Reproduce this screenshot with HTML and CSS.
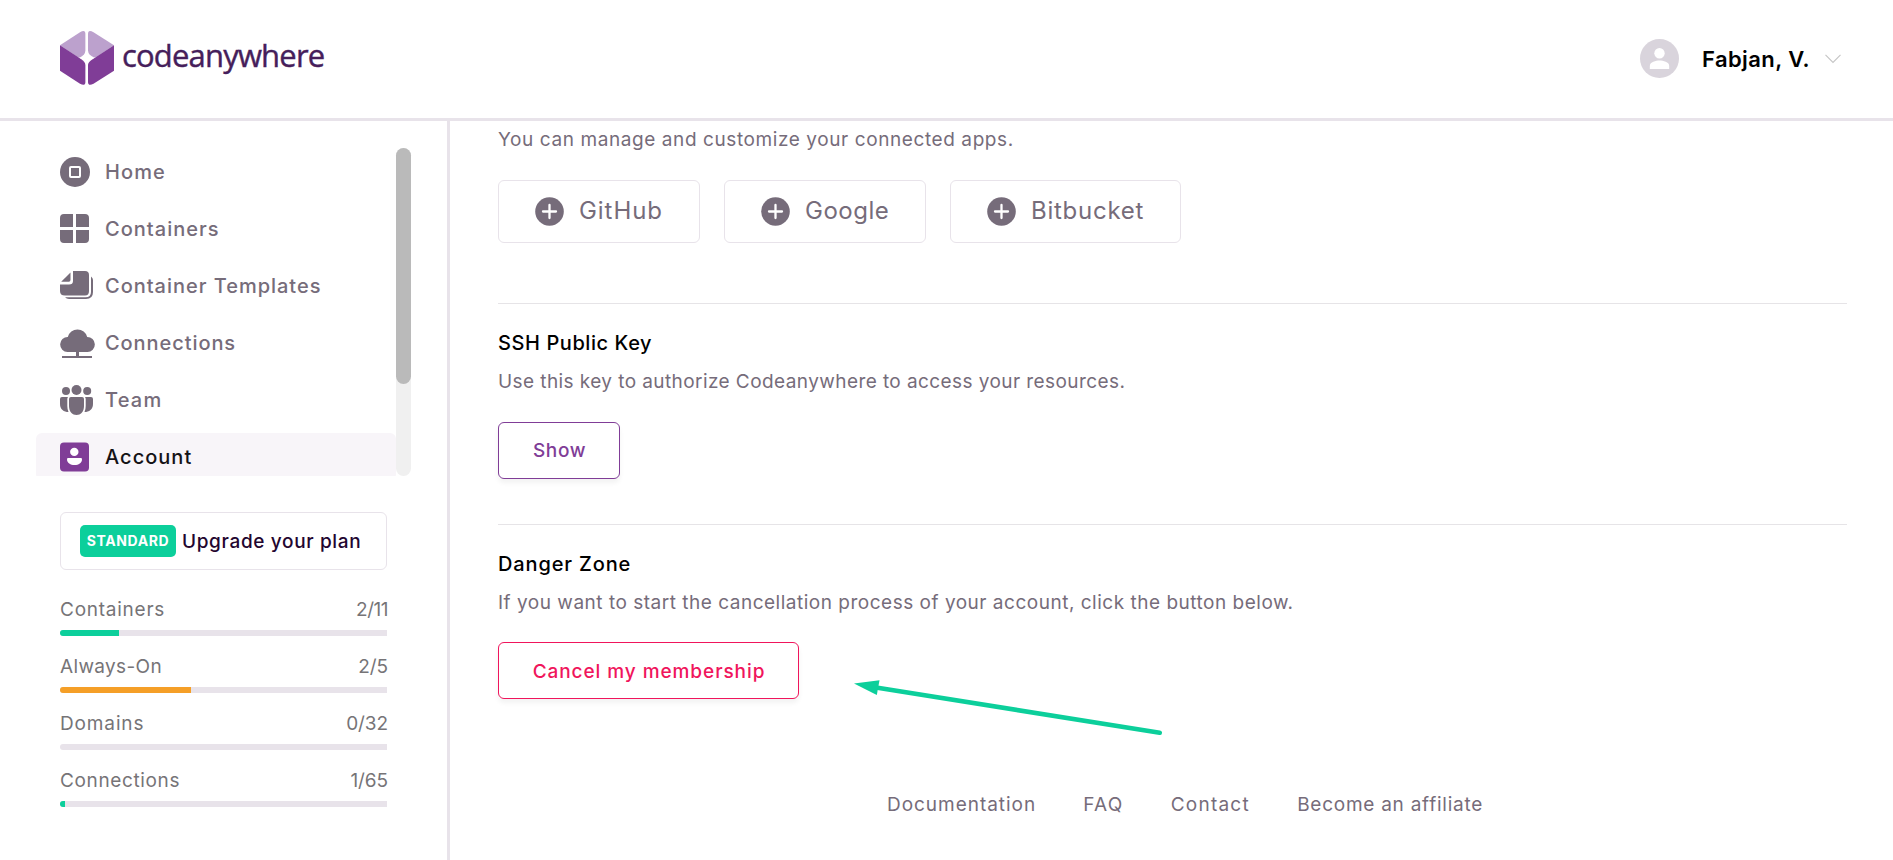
FILE: index.html
```html
<!DOCTYPE html>
<html lang="en">
<head>
<meta charset="utf-8">
<title>Codeanywhere</title>
<link rel="stylesheet" href="styles.css">
</head>
<body>
<header class="header">
  <div class="logo">
    <svg width="54" height="54" viewBox="0 0 54 54">
      <path fill="#bca1cd" d="M0 14.3 20 1.3Q25.4-1.8 25.4 3V19.5Q25.2 23.8 20 26.6L17 25.8Z"/>
      <path fill="#bca1cd" d="M54 14.3 33.5 1.3Q28 -1.8 28 3V19.5Q28.2 23.8 34 26.6L37 25.8Z"/>
      <path fill="#803d97" d="M0 14.3 21 28Q25.4 31 25.4 34V51Q25.4 55.5 20 52.8L0 39.7Z"/>
      <path fill="#803d97" d="M54 14.3 33 28Q28 31 28 34V51Q28 55.5 33.5 52.8L54 39.7Z"/>
      <path fill="#fff" d="M26.700 20Q27.500 25.500 34 27Q27.500 28.500 26.700 34Q26 28.500 19.500 27Q26 25.500 26.700 20Z"/>
    </svg>
    <span class="logo-text">codeanywhere</span>
  </div>
  <div class="user">
    <svg width="39" height="39" viewBox="0 0 39 39"><circle cx="19.5" cy="19.5" r="19.5" fill="#d9d4dc"/><circle cx="19.5" cy="14.2" r="5.2" fill="#fff"/><path fill="#fff" d="M9.8 30V27C9.8 23 16 21.6 19.5 21.6S29.2 23 29.2 27V30Z"/></svg>
    <span class="user-name">Fabjan, V.</span>
    <svg class="chevron" width="16" height="10" viewBox="0 0 16 10"><path d="M.5.8 8 8.4 15.5.8" fill="none" stroke="#c5c5c5" stroke-width="1.1"/></svg>
  </div>
</header>
<div class="layout">
  <aside class="sidebar">
    <div class="nav-wrap">
      <nav class="nav">
        <a class="nav-item"><svg class="icon" viewBox="0 0 36 30"><circle cx="15" cy="15" r="15"/><rect x="10" y="10" width="10" height="10" rx="1" fill="none" stroke="#fff" stroke-width="2"/></svg><span class="t-home">Home</span></a>
        <a class="nav-item"><svg class="icon" viewBox="0 1 36 30"><path d="M4 1H13V14H0V5Q0 1 4 1ZM16 1H25Q29 1 29 5V14H16ZM0 17H13V30H4Q0 30 0 26ZM16 17H29V26Q29 30 25 30H16Z"/></svg><span class="t-containers">Containers</span></a>
        <a class="nav-item"><svg class="icon" viewBox="0 1 36 30"><path d="M13 1H25Q29 1 29 5V21Q29 25.500 25 25.500H5Q0 25.500 0 21V14.500H9Q13 14.500 13 11Z"/><path d="M10.500 2.500V10Q10.500 11.700 8.800 11.700H1.200Z"/><path d="M31 6.500Q33 8 33 10V22Q33 29 26 29H9Q6.500 29 5 27.300H25.500Q31 27.300 31 22Z"/></svg><span class="t-templates">Container Templates</span></a>
        <a class="nav-item"><svg class="icon" viewBox="0 0 36 30"><path d="M7.500 24A7.500 7.500 0 0 1 7.800 9A10 10 0 0 1 27.200 9A7.500 7.500 0 0 1 27.500 24H19V28H32V30H2V28H16V24Z"/></svg><span class="t-connections">Connections</span></a>
        <a class="nav-item"><svg class="icon" viewBox="0 0 36 30"><circle cx="16.500" cy="5" r="5"/><circle cx="6" cy="6" r="4"/><circle cx="27.200" cy="6" r="4"/><path d="M9 14Q9 12 11 12H22Q24 12 24 14V21C24 27 20.500 30 16.500 30S9 27 9 21Z"/><path d="M2 12H8Q7.300 13 7.300 14V21Q7.300 24.500 8.500 27C4 27 0 24.500 0 19V14Q0 12 2 12ZM31 12H25Q25.700 13 25.700 14V21Q25.700 24.500 24.500 27C29 27 33 24.500 33 19V14Q33 12 31 12Z"/></svg><span class="t-team">Team</span></a>
        <a class="nav-item active"><svg class="icon" viewBox="0 .6 36 30"><rect y="1" width="29" height="29" rx="4" fill="#803d97"/><circle cx="14.300" cy="10.500" r="4.200" fill="#fff"/><path fill="#fff" d="M8 16.700H21Q22 16.700 22 18C22 21.500 18.500 23.500 14.500 23.500S7 21.500 7 18Q7 16.700 8 16.700Z"/></svg><span class="t-account">Account</span></a>
      </nav>
      <div class="scrollbar"><div class="thumb"></div></div>
    </div>
    <div class="plan"><span class="badge">STANDARD</span><span class="plan-text">Upgrade your plan</span></div>
    <div class="stats">
      <div class="stat"><div class="stat-row"><span class="s-containers">Containers</span><span class="s-v1">2/11</span></div><div class="bar"><div class="fill" style="width:18.1%"></div></div></div>
      <div class="stat"><div class="stat-row"><span class="s-always">Always-On</span><span>2/5</span></div><div class="bar"><div class="fill orange" style="width:40%"></div></div></div>
      <div class="stat"><div class="stat-row"><span class="s-domains">Domains</span><span>0/32</span></div><div class="bar"></div></div>
      <div class="stat"><div class="stat-row"><span class="s-connections">Connections</span><span>1/65</span></div><div class="bar"><div class="fill" style="width:1.54%"></div></div></div>
    </div>
  </aside>
  <main class="main">
    <p class="desc"><span class="d-apps">You can manage and customize your connected apps.</span></p>
    <div class="apps">
      <button class="app"><svg width="29" height="29" viewBox="0 0 29 29"><circle cx="14.500" cy="14.500" r="14.300" fill="#766c7a"/><path d="M14.500 8V21M8 14.500H21" stroke="#fff" stroke-width="2.300" stroke-linecap="round"/></svg><span class="a-github">GitHub</span></button>
      <button class="app"><svg width="29" height="29" viewBox="0 0 29 29"><circle cx="14.500" cy="14.500" r="14.300" fill="#766c7a"/><path d="M14.500 8V21M8 14.500H21" stroke="#fff" stroke-width="2.300" stroke-linecap="round"/></svg><span class="a-google">Google</span></button>
      <button class="app wide"><svg width="29" height="29" viewBox="0 0 29 29"><circle cx="14.500" cy="14.500" r="14.300" fill="#766c7a"/><path d="M14.500 8V21M8 14.500H21" stroke="#fff" stroke-width="2.300" stroke-linecap="round"/></svg><span class="a-bitbucket">Bitbucket</span></button>
    </div>
    <section class="section ssh">
      <h2 class="h-ssh">SSH Public Key</h2>
      <p class="desc"><span class="d-ssh">Use this key to authorize Codeanywhere to access your resources.</span></p>
      <button class="btn show">Show</button>
    </section>
    <section class="section danger">
      <h2 class="h-danger">Danger Zone</h2>
      <p class="desc"><span class="d-danger">If you want to start the cancellation process of your account, click the button below.</span></p>
      <button class="btn cancel">Cancel my membership</button>
      <svg class="arrow" width="312" height="60" viewBox="0 0 312 60"><path d="M22 7.500 305.700 52.800" stroke="#0ccf9b" stroke-width="4.600" stroke-linecap="round"/><path fill="#0ccf9b" d="M0 3.500 25.500.3 22.800 15Z"/></svg>
    </section>
    <footer class="footer"><a class="f-doc">Documentation</a><a class="f-faq">FAQ</a><a class="f-contact">Contact</a><a class="f-aff">Become an affiliate</a></footer>
  </main>
</div>
</body>
</html>
```
FILE: styles.css
```css
* { box-sizing: border-box; }
body { margin: 0; height: 860px; overflow: hidden; background: #fff; font-family: Inter, "Liberation Sans", sans-serif; font-size: 19px; line-height: 26px; color: #766c7a; }
h2, p { margin: 0; font-size: 19px; line-height: 26px; }
span, a { white-space: nowrap; }
button { font: inherit; color: inherit; background: #fff; padding: 0; }

.header { height: 121px; border-bottom: 3px solid #e8e3ea; display: flex; justify-content: space-between; padding: 0 52px 0 60px; }
.logo { display: flex; padding-top: 31px; gap: 8px; }
.logo-text { font: 400 31px/38px "Open Sans", sans-serif; letter-spacing: -.82px; color: #461e5b; -webkit-text-stroke: .4px #461e5b; padding-top: 5px; }
.user { display: flex; align-items: center; height: 117px; }
.user-name { font-weight: 600; font-size: 22px; color: #000; margin: 0 15px 0 23px; letter-spacing: .43px; }

.layout { display: flex; height: 739px; }
.sidebar { width: 450px; flex: none; border-right: 3px solid #e8e3ea; padding: 27px 36px 0; }
.nav-wrap { display: flex; height: 328px; }
.nav { width: 360px; height: 328px; overflow: hidden; display: flex; flex-direction: column; gap: 10px; }
.nav-item { flex: none; height: 47px; border-radius: 6px; padding-left: 24px; display: flex; align-items: center; gap: 9px; font-weight: 500; font-size: 20px; }
.nav-item span { padding-top: 1px; }
.nav-item.active { background: #f8f5f9; color: #141216; }
.icon { width: 36px; height: 30px; margin-top: 1px; fill: #766c7a; }
.t-home { letter-spacing: 1.1px; }
.t-containers { letter-spacing: 1.03px; }
.t-templates { letter-spacing: .98px; }
.t-connections { letter-spacing: .93px; }
.t-team { letter-spacing: 1.2px; }
.t-account { letter-spacing: 1.03px; }
.scrollbar { width: 15px; height: 328px; border-radius: 8px; background: #f0f0f0; }
.thumb { width: 15px; height: 236px; border-radius: 8px; background: #bababa; }

.plan { margin: 36px 0 0 24px; width: 327px; height: 58px; border: 1px solid #e8e3ea; border-radius: 6px; display: flex; align-items: center; padding-left: 19px; gap: 6px; }
.badge { width: 96px; height: 32px; border-radius: 5px; background: #0ccf9b; color: #fff; font-weight: 700; font-size: 14px; line-height: 32px; letter-spacing: .6px; text-align: center; }
.plan-text { color: #23052f; font-weight: 500; letter-spacing: .65px; padding-top: 1px; }

.stats { margin: 27px 0 0 24px; width: 327px; display: flex; flex-direction: column; gap: 18px; }
.stat-row { display: flex; justify-content: space-between; color: #767477; letter-spacing: -.1px; margin-right: -1px; }
.stat-row .s-v1 { letter-spacing: -.5px; }
.s-containers { letter-spacing: .75px; }
.s-always { letter-spacing: .35px; }
.s-domains { letter-spacing: .87px; }
.s-connections { letter-spacing: .63px; }
.bar { margin-top: 7px; height: 6px; border-radius: 3px 0 0 3px; background: #e8e3ea; overflow: hidden; }
.fill { height: 6px; background: #0ccf9b; }
.fill.orange { background: #f59f27; }

.main { flex: 1; padding: 6px 46px 0 48px; }
.d-apps { letter-spacing: .59px; }
.d-ssh { letter-spacing: .42px; }
.d-danger { letter-spacing: .51px; }
.apps { display: flex; gap: 24px; margin: 27px 0 60px; }
.app { width: 202px; height: 63px; border: 1px solid #e8e3ea; border-radius: 6px; display: flex; align-items: center; padding: 0 0 1px 36px; gap: 15px; font-size: 24px; }
.app span { padding-bottom: 1px; }
.app.wide { width: 231px; }
.a-github { letter-spacing: .95px; }
.a-google { letter-spacing: .5px; }
.a-bitbucket { letter-spacing: .75px; }
.section { border-top: 1px solid #e6e4e7; }
.section h2 { color: #000; font-weight: 500; font-size: 20px; }
.section .h-ssh { letter-spacing: .58px; }
.section .h-danger { letter-spacing: .86px; }
.section .desc { margin: 13px 0 27px; }
.ssh { height: 221px; padding-top: 26px; }
.danger { height: 175px; padding-top: 26px; margin-bottom: 93px; position: relative; }
.danger .desc { margin-bottom: 26px; }
.btn { display: block; height: 57px; border: 1px solid; border-radius: 6px; font-weight: 500; box-shadow: 0 4px 5px rgba(0, 0, 0, .05); }
.show { width: 122px; color: #803d97; letter-spacing: .6px; padding-left: 1px; }
.cancel { width: 301px; color: #f0155c; letter-spacing: .93px; padding: 2px 0 0 1px; }
.arrow { position: absolute; left: 356px; top: 155px; }
.footer { display: flex; gap: 47.2px; padding-left: 389px; }
.f-doc { letter-spacing: .97px; }
.f-faq { letter-spacing: 1.2px; }
.f-contact { letter-spacing: 1.25px; }
.f-aff { letter-spacing: .75px; }
```
